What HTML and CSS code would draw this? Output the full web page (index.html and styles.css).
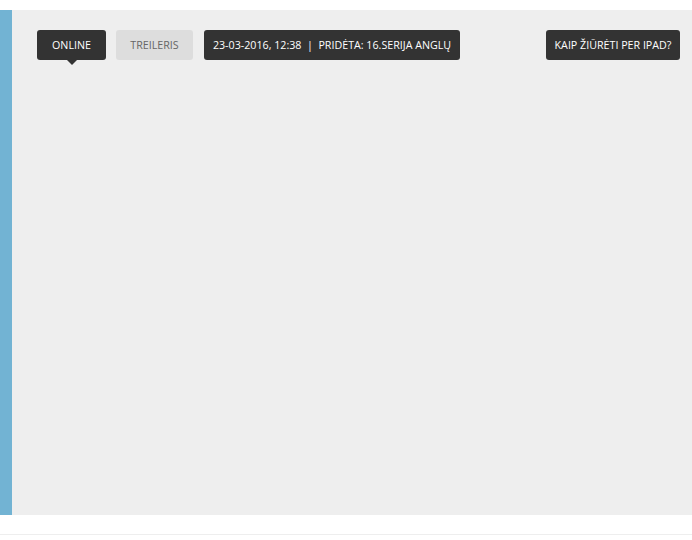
FILE: index.html
```html
<!DOCTYPE html>
<html lang="lt">
<head>
    <meta charset="UTF-8">
    <meta name="viewport" content="width=device-width, initial-scale=1.0">
    <title>Online</title>
    <link rel="stylesheet" href="styles.css">
</head>
<body>
    <div class="player">
        <div class="toolbar">
            <a class="tab tab-active" href="#">Online</a>
            <a class="tab" href="#">Treileris</a>
            <span class="info">23-03-2016, 12:38 &nbsp;|&nbsp; Pridėta: 16.serija anglų</span>
            <a class="help" href="#">Kaip žiūrėti per iPad?</a>
        </div>
    </div>
    <div class="footer"></div>
</body>
</html>
```

FILE: styles.css
```css
body {
    font-family: 'Open Sans', 'Noto Sans', sans-serif;
    margin: 0;
    padding: 10px 0 0;
    background-color: #fff;
}
.player {
    height: 505px;
    background-color: #eee;
    border-left: 12px solid #72b3d3;
}
.toolbar {
    display: flex;
    align-items: center;
    padding: 20px 12px 0 25px;
}
.tab, .info, .help {
    display: flex;
    align-items: center;
    justify-content: center;
    height: 30px;
    padding: 0 15px;
    font-size: 10.7px;
    text-transform: uppercase;
    text-decoration: none;
    border-radius: 3px;
    white-space: nowrap;
    box-sizing: border-box;
}
.tab {
    background-color: #ddd;
    color: #666;
    margin-right: 10px;
    position: relative;
    width: 77px;
}
.tab-active {
    background-color: #333;
    color: #fff;
    width: 69px;
}
.tab-active:after {
    content: '';
    position: absolute;
    left: 50%;
    bottom: -5px;
    margin-left: -5px;
    border-left: 5px solid transparent;
    border-right: 5px solid transparent;
    border-top: 5px solid #333;
}
.info {
    background-color: #333;
    color: #fff;
    width: 256px;
    margin-left: 1px;
}
.help {
    margin-left: auto;
    background-color: #333;
    color: #fff;
    width: 134px;
}
.footer {
    height: 19px;
    border-bottom: 1px solid #eee;
}
```
